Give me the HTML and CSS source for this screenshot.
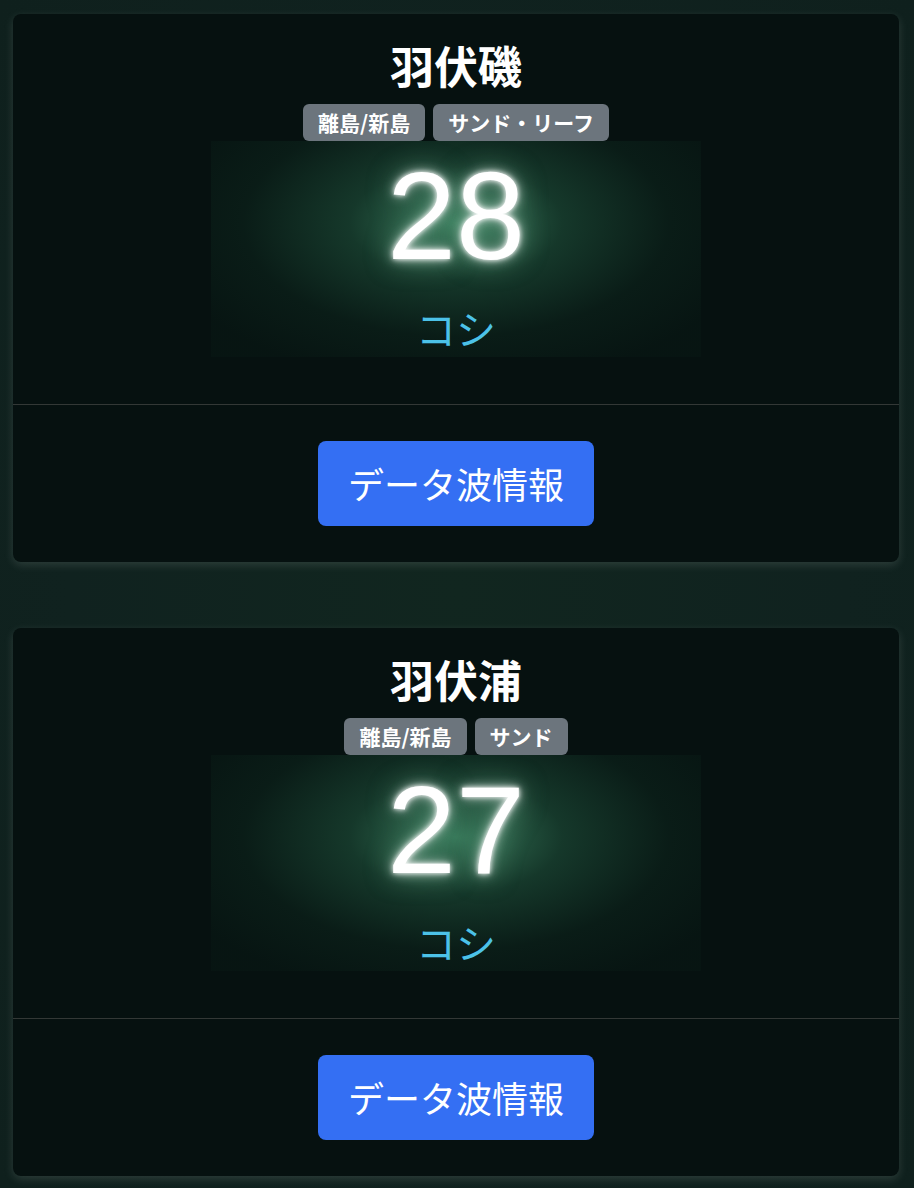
FILE: index.html
```html
<!DOCTYPE html>
<html lang="ja">
<head>
<meta charset="utf-8">
<link rel="stylesheet" href="styles.css">
</head>
<body>
<div class="list">
  <div class="card">
    <div class="card-body">
      <h2 class="title">羽伏磯</h2>
      <div class="badges">
        <span class="badge">離島/新島</span>
        <span class="badge">サンド・リーフ</span>
      </div>
      <div class="glow">
        <div class="num">28</div>
        <div class="size">コシ</div>
      </div>
    </div>
    <div class="card-footer">
      <a class="btn">データ波情報</a>
    </div>
  </div>
  <div class="card">
    <div class="card-body">
      <h2 class="title">羽伏浦</h2>
      <div class="badges">
        <span class="badge">離島/新島</span>
        <span class="badge">サンド</span>
      </div>
      <div class="glow">
        <div class="num">27</div>
        <div class="size">コシ</div>
      </div>
    </div>
    <div class="card-footer">
      <a class="btn">データ波情報</a>
    </div>
  </div>
</div>
</body>
</html>
```
FILE: styles.css
```css
html, body {
  margin: 0;
  padding: 0;
}
body {
  background: radial-gradient(ellipse at 50% 50%, #11261f 0%, #10221f 60%, #0f201d 100%);
  background-color: #10221f;
  min-height: 1188px;
  font-family: "Noto Sans CJK JP", "Noto Sans", sans-serif;
  color: #fff;
}
.list {
  display: flex;
  flex-direction: column;
  gap: 66px;
  padding: 14px 15px 0 13px;
}
.card {
  background: #061110;
  border-radius: 8px;
  box-shadow: 0 3px 10px rgba(200, 210, 205, 0.16);
  overflow: hidden;
}
.card-body {
  display: flex;
  flex-direction: column;
  align-items: center;
  padding: 26px 0 47px;
}
.title {
  margin: 0;
  font-size: 44px;
  line-height: 50px;
  font-weight: 700;
}
.badges {
  display: flex;
  gap: 8px;
  margin-top: 14px;
}
.badge {
  background: #6c757d;
  border-radius: 6px;
  font-size: 21px;
  font-weight: 700;
  line-height: 23px;
  padding: 7px 15px;
}
.glow {
  width: 490px;
  height: 216px;
  display: flex;
  flex-direction: column;
  align-items: center;
  background: radial-gradient(ellipse 62% 75% at 50% 38%, rgba(62, 135, 100, 0.85) 0%, rgba(34, 88, 64, 0.55) 35%, rgba(18, 52, 38, 0.32) 70%, rgba(12, 38, 28, 0.18) 100%);
}
.num {
  font-family: "Liberation Sans", Arial, sans-serif;
  font-size: 124px;
  line-height: 100px;
  margin-top: 25px;
  color: #fff;
  text-shadow: 0 0 5px #fff, 0 0 12px rgba(255, 255, 255, 0.75), 0 0 28px rgba(150, 225, 185, 0.55);
}
.size {
  font-size: 40px;
  line-height: 48px;
  color: #4cc2e8;
  margin-top: 38px;
}
.card-footer {
  border-top: 1px solid #333836;
  display: flex;
  justify-content: center;
  padding: 36px 0 36px;
}
.btn {
  display: block;
  background: #346ff3;
  color: #fff;
  border-radius: 8px;
  font-size: 36px;
  line-height: 53px;
  padding: 16px 30px;
}
```
